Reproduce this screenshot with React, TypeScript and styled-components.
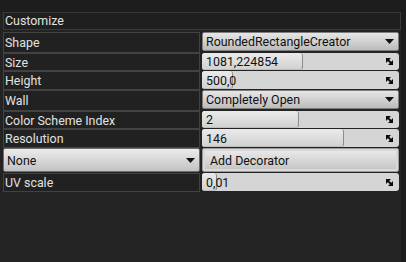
import React from "react";
import styled, { createGlobalStyle } from "styled-components";

const Global = createGlobalStyle`
  html, body { margin: 0; padding: 0; background: #232323; }
  body { width: 406px; height: 262px; overflow: hidden; font-family: Roboto, "Noto Sans", sans-serif; }
`;

const Screen = styled.div`
  display: flex;
  width: 406px;
  height: 262px;
  background: #232323;
`;

const Main = styled.div`
  flex: 1;
  display: flex;
  flex-direction: column;
`;

const SideStrip = styled.div`
  width: 5px;
  background: #1c1c1c;
`;

const TopBar = styled.div`
  height: 12px;
  background: #1d1d1d;
`;

const Panel = styled.div`
  display: flex;
  flex-direction: column;
  padding: 0 0 0 3px;
`;

const Header = styled.div`
  height: 18px;
  box-sizing: border-box;
  margin-bottom: 2px;
  border: 1px solid #3a3a3a;
  background: #1f1f1f;
  color: #e2e2e2;
  font-size: 12.4px;
  line-height: 16px;
  padding-left: 1px;
`;

const Row = styled.div<{ $h: number }>`
  display: grid;
  grid-template-columns: 197px 197px;
  column-gap: 2px;
  height: ${(p) => p.$h}px;
`;

const Label = styled.div`
  box-sizing: border-box;
  border: 1px solid #424242;
  background: #212121;
  color: #e2e2e2;
  font-size: 12.4px;
  display: flex;
  align-items: center;
  padding-left: 1px;
  white-space: nowrap;
`;

const ValueBox = styled.div<{ $h: number }>`
  position: relative;
  height: ${(p) => p.$h}px;
  background: #d5d5d5;
  border-radius: 3px;
  overflow: hidden;
  display: flex;
  align-items: center;
  padding: 0 6px 0 4px;
  color: #111;
  font-size: 12.4px;
`;

const Fill = styled.div`
  position: absolute;
  left: 0;
  top: 0;
  bottom: 0;
  box-sizing: border-box;
  background: linear-gradient(#eaeaea, #d2d2d2);
  border-right: 1px solid #8c8c8c;
  border-bottom: 1px solid #bdbdbd;
  border-radius: 0 3px 3px 0;
`;

const ValueText = styled.span`
  position: relative;
  flex: 1;
  white-space: nowrap;
`;

const Dropdown = styled.div<{ $h: number }>`
  height: ${(p) => p.$h}px;
  box-sizing: border-box;
  border: 1px solid #7e7e7e;
  border-radius: 2px;
  background: linear-gradient(#e6e6e6, #bcbcbc);
  display: flex;
  align-items: center;
  padding: 0 4px 0 3px;
  color: #111;
  font-size: 12.4px;
  white-space: nowrap;
`;

const DropText = styled.span`
  flex: 1;
`;

const Button = styled.div<{ $inner?: boolean }>`
  height: 24px;
  box-sizing: border-box;
  border: 1px solid ${(p) => (p.$inner ? "#9a9a9a" : "#6e6e6e")};
  border-radius: 2px;
  background: linear-gradient(#ececec, #c2c2c2);
  box-shadow: ${(p) => (p.$inner ? "inset 0 0 0 2px #d9d9d9" : "none")};
  display: flex;
  align-items: center;
  padding: 0 4px 0 ${(p) => (p.$inner ? 7 : 3)}px;
  color: #111;
  font-size: 12.4px;
  white-space: nowrap;
`;

const Arrow = () => (
  <svg width="9" height="5" viewBox="0 0 9 5">
    <path d="M0 0 H9 L4.5 5 Z" fill="#111" />
  </svg>
);

const ResizeIcon = () => (
  <svg width="7" height="7" viewBox="0 0 7 7" style={{ position: "relative" }}>
    <path d="M0 0 H5 L0 5 Z" fill="#0a0a0a" />
    <path d="M7 7 H2 L7 2 Z" fill="#0a0a0a" />
    <path d="M1 1 L6 6" stroke="#0a0a0a" strokeWidth="1.8" />
  </svg>
);

type Slider = { label: string; value: string; fill: number; h: number };

const SliderRow = ({ label, value, fill, h }: Slider) => (
  <Row $h={h}>
    <Label>{label}</Label>
    <ValueBox $h={h - 1}>
      <Fill style={{ width: `${fill}px` }} />
      <ValueText>{value}</ValueText>
      <ResizeIcon />
    </ValueBox>
  </Row>
);

const DropRow = ({ label, value, h }: { label: string; value: string; h: number }) => (
  <Row $h={h}>
    <Label>{label}</Label>
    <Dropdown $h={h - 2}>
      <DropText>{value}</DropText>
      <Arrow />
    </Dropdown>
  </Row>
);

export default function App() {
  return (
    <>
      <Global />
      <Screen>
        <Main>
          <TopBar />
          <Panel>
            <Header>Customize</Header>
            <DropRow label="Shape" value="RoundedRectangleCreator" h={21} />
            <SliderRow label="Size" value="1081,224854" fill={101} h={18} />
            <SliderRow label="Height" value="500,0" fill={31} h={19} />
            <DropRow label="Wall" value="Completely Open" h={21} />
            <SliderRow label="Color Scheme Index" value="2" fill={97} h={18} />
            <SliderRow label="Resolution" value="146" fill={142} h={19} />
            <Row $h={25}>
              <Button>
                <DropText>None</DropText>
                <Arrow />
              </Button>
              <Button $inner>Add Decorator</Button>
            </Row>
            <SliderRow label="UV scale" value="0,01" fill={15} h={19} />
          </Panel>
        </Main>
        <SideStrip />
      </Screen>
    </>
  );
}
